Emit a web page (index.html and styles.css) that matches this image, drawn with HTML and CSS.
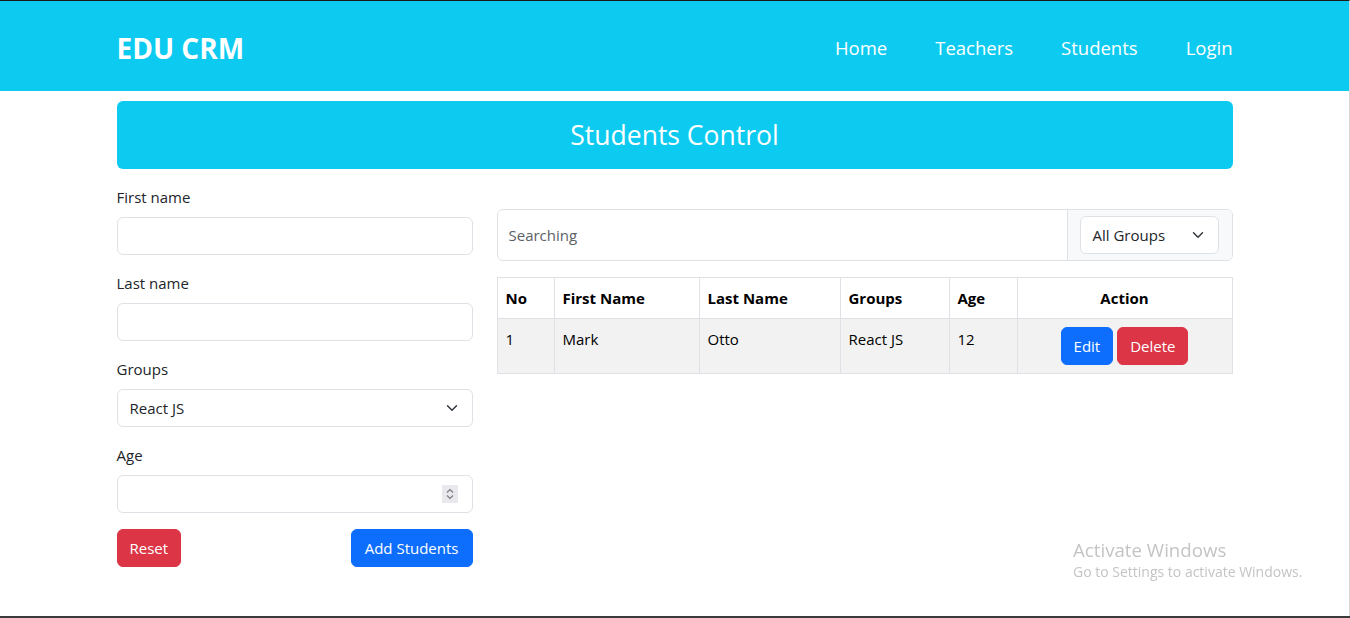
FILE: index.html
```html
<!DOCTYPE html>
<html lang="en">
<head>
<meta charset="utf-8">
<title>EDU CRM</title>
<link rel="stylesheet" href="styles.css">
</head>
<body>
<header class="navbar">
  <div class="container nav-inner">
    <a class="brand" href="#">EDU CRM</a>
    <nav class="nav-links">
      <a href="#">Home</a>
      <a href="#">Teachers</a>
      <a href="#">Students</a>
      <a href="#">Login</a>
    </nav>
  </div>
</header>

<main class="container main">
  <h2 class="banner">Students Control</h2>
  <div class="row">
    <form class="form-col">
      <div class="field">
        <label class="label">First name</label>
        <input class="control" type="text">
      </div>
      <div class="field">
        <label class="label">Last name</label>
        <input class="control" type="text">
      </div>
      <div class="field">
        <label class="label">Groups</label>
        <div class="select">React JS</div>
      </div>
      <div class="field">
        <label class="label">Age</label>
        <div class="number-wrap">
          <input class="control" type="text">
          <span class="spin">
            <svg width="10" height="14" viewBox="0 0 10 14"><path d="M2 5.5 5 2.5 8 5.5M2 8.5 5 11.5 8 8.5" fill="none" stroke="#7a7d80" stroke-width="1.2"/></svg>
          </span>
        </div>
      </div>
      <div class="actions">
        <button type="button" class="btn btn-danger">Reset</button>
        <button type="button" class="btn btn-primary btn-wide">Add Students</button>
      </div>
    </form>

    <section class="table-col">
      <div class="input-group">
        <div class="search">Searching</div>
        <div class="group-text">
          <div class="select select-sm">All Groups</div>
        </div>
      </div>
      <table class="table">
        <colgroup>
          <col style="width:57px"><col style="width:145px"><col style="width:141px"><col style="width:109px"><col style="width:68px"><col>
        </colgroup>
        <thead>
          <tr><th>No</th><th>First Name</th><th>Last Name</th><th>Groups</th><th>Age</th><th class="center">Action</th></tr>
        </thead>
        <tbody>
          <tr>
            <td>1</td><td>Mark</td><td>Otto</td><td>React JS</td><td>12</td>
            <td class="center"><button type="button" class="btn btn-primary">Edit</button> <button type="button" class="btn btn-danger">Delete</button></td>
          </tr>
        </tbody>
      </table>
    </section>
  </div>
</main>

<div class="watermark">
  <div class="wm-title">Activate Windows</div>
  <div class="wm-sub">Go to Settings to activate Windows.</div>
</div>
<div class="frame-bottom"></div>
</body>
</html>
```

FILE: styles.css
```css
* { box-sizing: border-box; }

html, body {
  margin: 0;
  padding: 0;
}

body {
  font-family: "Open Sans", "Noto Sans", sans-serif;
  font-size: 15px;
  line-height: 24px;
  color: #212529;
  background: #fff;
  border-top: 1px solid #1a1a1a;
  border-right: 1px solid #d8d8d8;
  min-height: 618px;
}

.container {
  width: 1116px;
  margin: 0 auto;
}

.navbar {
  background: #0dcaf0;
  height: 90px;
}

.nav-inner {
  height: 100%;
  display: flex;
  align-items: center;
  justify-content: space-between;
}

.brand {
  color: #fff;
  text-decoration: none;
  font-weight: 700;
  font-size: 28px;
  line-height: 36px;
  margin-top: 4px;
}

.nav-links {
  display: flex;
  gap: 48px;
  margin-top: 4px;
}

.nav-links a {
  color: #fff;
  text-decoration: none;
  font-size: 18.5px;
}

.main {
  padding-top: 10px;
}

.banner {
  margin: 0;
  background: #0dcaf0;
  color: #fff;
  font-weight: 400;
  font-size: 26.5px;
  line-height: 44px;
  padding: 12px 0;
  text-align: center;
  border-radius: 6px;
}

.row {
  display: flex;
  gap: 24px;
  align-items: flex-start;
}

.form-col {
  width: 356px;
  flex: none;
  padding-top: 16px;
}

.field {
  margin-bottom: 16px;
}

.label {
  display: block;
  margin-bottom: 8px;
}

.control {
  display: block;
  width: 100%;
  height: 38px;
  border: 1px solid #dee2e6;
  border-radius: 6px;
  background: #fff;
  font: inherit;
  padding: 6px 12px;
}

.select {
  height: 38px;
  border: 1px solid #dee2e6;
  border-radius: 6px;
  background: #fff url("data:image/svg+xml,%3csvg xmlns='http://www.w3.org/2000/svg' viewBox='0 0 16 16'%3e%3cpath fill='none' stroke='%23343a40' stroke-linecap='round' stroke-linejoin='round' stroke-width='2' d='m2 5 6 6 6-6'/%3e%3c/svg%3e") no-repeat right 12px center / 16px 12px;
  padding: 6px 36px 6px 12px;
  color: #212529;
}

.number-wrap {
  position: relative;
}

.spin {
  position: absolute;
  right: 15px;
  top: 10px;
  width: 16px;
  height: 18px;
  background: #e9e9ed;
  display: flex;
  align-items: center;
  justify-content: center;
}

.actions {
  display: flex;
  justify-content: space-between;
}

.btn {
  display: inline-block;
  height: 38px;
  padding: 6px 12px;
  border: 1px solid transparent;
  border-radius: 6px;
  font: inherit;
  color: #fff;
  line-height: 24px;
  vertical-align: middle;
  cursor: pointer;
}

.btn-wide {
  padding: 6px 13px;
}

.btn-primary {
  background: #0d6efd;
  border-color: #0d6efd;
}

.btn-danger {
  background: #dc3545;
  border-color: #dc3545;
}

.table-col {
  flex: 1;
  padding-top: 40px;
}

.input-group {
  display: flex;
  height: 52px;
  border: 1px solid #dee2e6;
  border-radius: 6px;
  overflow: hidden;
}

.search {
  flex: 1;
  padding: 13px 11px;
  color: #5c6166;
}

.group-text {
  width: 165px;
  background: #f8f9fa;
  border-left: 1px solid #dee2e6;
  padding: 6px 12px;
}

.select-sm {
  width: 139px;
}

.table {
  width: 100%;
  margin-top: 16px;
  border-collapse: collapse;
  table-layout: fixed;
  border: 1px solid #dee2e6;
}

.table th,
.table td {
  border: 1px solid #dee2e6;
  padding: 8px;
  text-align: left;
  vertical-align: top;
  color: #000;
}

.table th {
  font-weight: 700;
}

.table tbody tr {
  background: #f2f2f2;
}

.table td {
  height: 55px;
}

.table .center {
  text-align: center;
}

.table td .btn {
  color: #fff;
}

.watermark {
  position: fixed;
  left: 1073px;
  top: 537px;
  color: #c4c4c4;
  font-family: "Open Sans", sans-serif;
  pointer-events: none;
}

.wm-title {
  font-size: 18.7px;
  line-height: 26px;
}

.wm-sub {
  font-size: 14px;
  line-height: 18px;
}

.frame-bottom {
  position: fixed;
  left: 0;
  right: 0;
  bottom: 0;
  height: 2px;
  background: #3a3a3a;
}
```
